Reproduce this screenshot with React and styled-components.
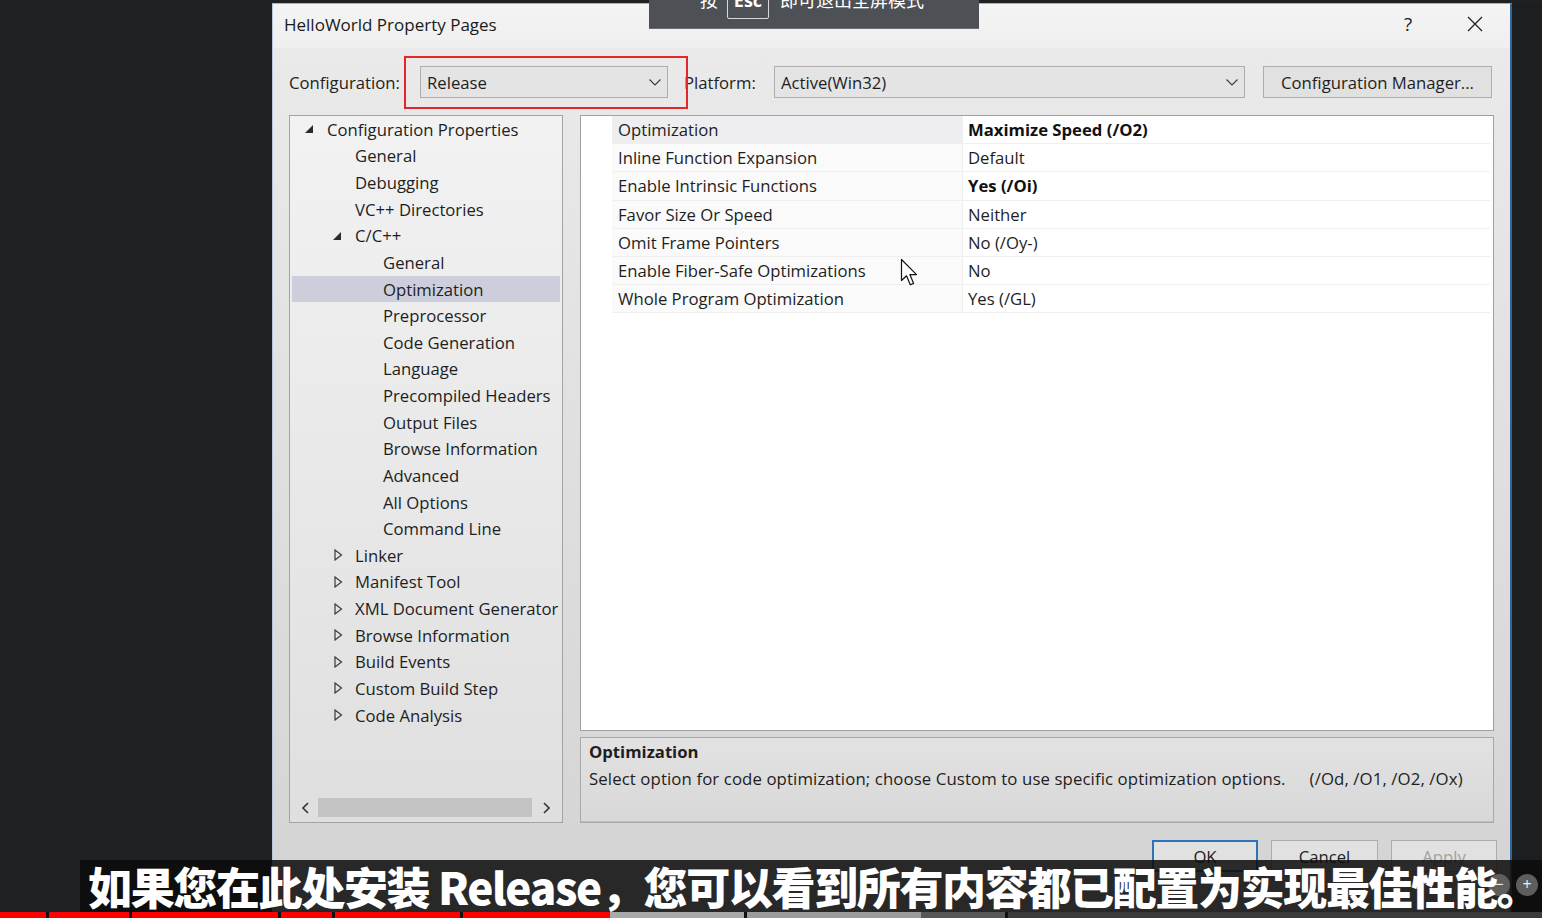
import React from "react";
import styled, { createGlobalStyle } from "styled-components";

const UI_FONT = `"Open Sans", "Noto Sans", sans-serif`;
const CJK_FONT = `"Noto Sans CJK SC", "Noto Sans", sans-serif`;

const treeItems = [
  { label: "Configuration Properties", level: 0, expander: "open" },
  { label: "General", level: 1 },
  { label: "Debugging", level: 1 },
  { label: "VC++ Directories", level: 1 },
  { label: "C/C++", level: 1, expander: "open" },
  { label: "General", level: 2 },
  { label: "Optimization", level: 2, selected: true },
  { label: "Preprocessor", level: 2 },
  { label: "Code Generation", level: 2 },
  { label: "Language", level: 2 },
  { label: "Precompiled Headers", level: 2 },
  { label: "Output Files", level: 2 },
  { label: "Browse Information", level: 2 },
  { label: "Advanced", level: 2 },
  { label: "All Options", level: 2 },
  { label: "Command Line", level: 2 },
  { label: "Linker", level: 1, expander: "closed" },
  { label: "Manifest Tool", level: 1, expander: "closed" },
  { label: "XML Document Generator", level: 1, expander: "closed" },
  { label: "Browse Information", level: 1, expander: "closed" },
  { label: "Build Events", level: 1, expander: "closed" },
  { label: "Custom Build Step", level: 1, expander: "closed" },
  { label: "Code Analysis", level: 1, expander: "closed" },
];

const properties = [
  { name: "Optimization", value: "Maximize Speed (/O2)", bold: true, selected: true },
  { name: "Inline Function Expansion", value: "Default" },
  { name: "Enable Intrinsic Functions", value: "Yes (/Oi)", bold: true },
  { name: "Favor Size Or Speed", value: "Neither" },
  { name: "Omit Frame Pointers", value: "No (/Oy-)" },
  { name: "Enable Fiber-Safe Optimizations", value: "No" },
  { name: "Whole Program Optimization", value: "Yes (/GL)" },
];

// video progress bar: [width, colour]
const progress = [
  [46, "#f00"], [3, "#111"], [80, "#f00"], [3, "#111"], [146, "#f00"], [3, "#111"],
  [51, "#f00"], [3, "#111"], [125, "#f00"], [3, "#111"], [147, "#f00"],
  [134, "#a9a9a9"], [3, "#111"], [174, "#9b9b9b"], [84, "#585858"], [3, "#111"],
  [534, "#3b3b3b"],
];

const Chevron = () => (
  <svg width="12" height="7" viewBox="0 0 12 7">
    <polyline points="0.5,0.5 6,6 11.5,0.5" fill="none" stroke="#3a3a3a" strokeWidth="1.1" />
  </svg>
);

const Expander = ({ kind }) =>
  kind === "open" ? (
    <svg width="8" height="8" viewBox="0 0 8 8">
      <polygon points="8,0 8,8 0,8" fill="#2b2b2b" />
    </svg>
  ) : (
    <svg width="9" height="12" viewBox="0 0 9 12" style={{ marginLeft: 1 }}>
      <polygon points="1,1 7.5,6 1,11" fill="none" stroke="#3a3a3a" strokeWidth="1.2" />
    </svg>
  );

const ScrollArrow = ({ dir }) => (
  <svg width="8" height="12" viewBox="0 0 8 12">
    <polyline
      points={dir === "left" ? "7,1 2,6 7,11" : "1,1 6,6 1,11"}
      fill="none"
      stroke="#333"
      strokeWidth="1.6"
    />
  </svg>
);

const App = () => {
  return (
    <Screen>
      <GlobalStyle />
      <Stage>
        <Backdrop $w={272} $bg="#1f2123" />
        <Dialog>
          <TitleBar>
            <Title>HelloWorld Property Pages</Title>
            <TitleButton>?</TitleButton>
            <TitleButton>
              <svg width="16" height="16" viewBox="0 0 16 16">
                <path d="M1 1 L15 15 M15 1 L1 15" stroke="#222" strokeWidth="1.3" />
              </svg>
            </TitleButton>
          </TitleBar>

          <Body>
            <ConfigRow>
              <FieldLabel $w={131}>Configuration:</FieldLabel>
              <Combo $w={248}>
                <span>Release</span>
                <Chevron />
              </Combo>
              <FieldLabel $w={90} $gap={16}>Platform:</FieldLabel>
              <Combo $w={471}>
                <span>Active(Win32)</span>
                <Chevron />
              </Combo>
              <Button $w={229} $gap={18}>Configuration Manager...</Button>
            </ConfigRow>

            <Main>
              <TreePanel>
                <TreeList>
                  {treeItems.map((item, i) => (
                    <TreeRow key={i} $level={item.level} $selected={item.selected}>
                      <ExpanderSlot>{item.expander && <Expander kind={item.expander} />}</ExpanderSlot>
                      <TreeLabel>{item.label}</TreeLabel>
                    </TreeRow>
                  ))}
                </TreeList>
                <HScroll>
                  <ScrollButton><ScrollArrow dir="left" /></ScrollButton>
                  <ScrollThumb />
                  <ScrollButton><ScrollArrow dir="right" /></ScrollButton>
                </HScroll>
              </TreePanel>

              <RightColumn>
                <GridPanel>
                  {properties.map((p) => (
                    <PropRow key={p.name}>
                      <PropName $selected={p.selected}>{p.name}</PropName>
                      <PropValue $bold={p.bold}>{p.value}</PropValue>
                    </PropRow>
                  ))}
                </GridPanel>
                <DescPanel>
                  <DescTitle>Optimization</DescTitle>
                  <DescText>
                    Select option for code optimization; choose Custom to use specific optimization options.
                    <Switches>(/Od, /O1, /O2, /Ox)</Switches>
                  </DescText>
                </DescPanel>
              </RightColumn>
            </Main>

            <ButtonRow>
              <Button $w={106} $primary>OK</Button>
              <Button $w={107}>Cancel</Button>
              <Button $w={106} $disabled>Apply</Button>
            </ButtonRow>
          </Body>
        </Dialog>
        <Backdrop $grow $bg="#1d1e20" />
      </Stage>

      <ProgressBar>
        {progress.map(([w, c], i) => (
          <ProgressSegment key={i} $w={w} $c={c} />
        ))}
      </ProgressBar>

      <Highlight />

      <Cursor>
        <svg width="19" height="29" viewBox="0 0 19 29">
          <path
            d="M1.5 1.5 L1.5 22.5 L6.5 17.8 L10.3 26.8 L13.6 25.4 L9.9 16.6 L16.5 16.6 Z"
            fill="#fff"
            stroke="#111"
            strokeWidth="1.2"
            strokeLinejoin="round"
          />
        </svg>
      </Cursor>

      <FullscreenHint>
        <HintRow>
          <HintText>按</HintText>
          <KeyCap>Esc</KeyCap>
          <HintText>即可退出全屏模式</HintText>
        </HintRow>
      </FullscreenHint>

      <Subtitle>
        <ZoomDot $x={1488}>−</ZoomDot>
        <ZoomDot $x={1516}>+</ZoomDot>
        <SubtitleText>如果您在此处安装 Release，您可以看到所有内容都已配置为实现最佳性能。</SubtitleText>
      </Subtitle>
    </Screen>
  );
};

export default App;

const GlobalStyle = createGlobalStyle`
  html, body {
    margin: 0;
    padding: 0;
    background: #1f2123;
    overflow: hidden;
  }
  * {
    box-sizing: border-box;
  }
`;

const Screen = styled.div`
  position: relative;
  width: 1542px;
  height: 918px;
  display: flex;
  flex-direction: column;
  overflow: hidden;
  background: #1f2123;
  font-family: ${UI_FONT};
`;

const Stage = styled.div`
  height: 912px;
  display: flex;
  padding-top: 3px;
  overflow: hidden;
`;

const Backdrop = styled.div`
  width: ${(p) => (p.$w ? `${p.$w}px` : "auto")};
  flex: ${(p) => (p.$grow ? 1 : "none")};
  background: ${(p) => p.$bg};
`;

const Dialog = styled.div`
  width: 1240px;
  flex: none;
  height: 960px;
  display: flex;
  flex-direction: column;
  border-left: 1px solid #b4c8dc;
  border-top: 1px solid #9db3c9;
  border-right: 2px solid #2d679c;
  background: linear-gradient(#ebebeb, #d2d2d2);
  color: #1e1e1e;
  font-size: 16.7px;
`;

const TitleBar = styled.div`
  height: 44px;
  display: flex;
  align-items: center;
  padding: 0 12px 4px 11px;
  background: linear-gradient(#f4f4f4, #efefef);
`;

const Title = styled.div`
  flex: 1;
  font-size: 17px;
  color: #1a1a1a;
`;

const TitleButton = styled.div`
  width: 46px;
  height: 30px;
  display: flex;
  align-items: center;
  justify-content: center;
  font-size: 19px;
  color: #222;
  & + & {
    margin-left: 21px;
  }
`;

const Body = styled.div`
  flex: 1;
  display: flex;
  flex-direction: column;
  padding: 18px 16px 0 16px;
`;

const ConfigRow = styled.div`
  height: 32px;
  display: flex;
  align-items: center;
`;

const FieldLabel = styled.div`
  width: ${(p) => p.$w}px;
  margin-left: ${(p) => p.$gap || 0}px;
  white-space: nowrap;
`;

const Combo = styled.div`
  width: ${(p) => p.$w}px;
  height: 32px;
  display: flex;
  align-items: center;
  justify-content: space-between;
  padding: 0 6px 0 6px;
  background: #e4e4e4;
  border: 1px solid #adadad;
`;

const Button = styled.div`
  width: ${(p) => p.$w}px;
  height: 32px;
  margin-left: ${(p) => p.$gap || 0}px;
  display: flex;
  align-items: center;
  justify-content: center;
  background: #e1e1e1;
  border: ${(p) => (p.$primary ? "2px solid #2f72b8" : "1px solid #adadad")};
  color: ${(p) => (p.$disabled ? "#a0a0a0" : "#1e1e1e")};
  white-space: nowrap;
`;

const Main = styled.div`
  margin-top: 17px;
  height: 708px;
  display: flex;
  gap: 17px;
`;

const TreePanel = styled.div`
  width: 274px;
  display: flex;
  flex-direction: column;
  border: 1px solid #a3a3a3;
  background: linear-gradient(#f2f2f2, #dfdfdf);
  padding: 0 1px 4px 1px;
`;

const TreeList = styled.div`
  flex: 1;
  overflow: hidden;
`;

const TreeRow = styled.div`
  height: 26.64px;
  display: flex;
  align-items: center;
  padding-left: ${(p) => 13 + p.$level * 28}px;
  margin: 0 1px;
  background: ${(p) => (p.$selected ? "#cccfdb" : "transparent")};
  white-space: nowrap;
`;

const ExpanderSlot = styled.div`
  width: 22px;
  flex: none;
  display: flex;
  align-items: center;
`;

const TreeLabel = styled.span`
  color: #1e1e1e;
`;

const HScroll = styled.div`
  height: 21px;
  display: flex;
  align-items: stretch;
`;

const ScrollButton = styled.div`
  width: 27px;
  display: flex;
  align-items: center;
  justify-content: center;
  &:last-child {
    width: 29px;
  }
`;

const ScrollThumb = styled.div`
  flex: 1;
  background: #c3c3c3;
  margin: 1px 0;
`;

const RightColumn = styled.div`
  flex: 1;
  display: flex;
  flex-direction: column;
  gap: 6px;
`;

const GridPanel = styled.div`
  flex: 1;
  background: #fff;
  border: 1px solid #a0a0a0;
  padding: 0 3px 0 31px;
`;

const PropRow = styled.div`
  height: 28.2px;
  display: grid;
  grid-template-columns: 350px 1fr;
  border-bottom: 1px solid #efefef;
`;

const PropName = styled.div`
  display: flex;
  align-items: center;
  padding-left: 6px;
  background: ${(p) => (p.$selected ? "#eeeef1" : "#fafafa")};
  white-space: nowrap;
`;

const PropValue = styled.div`
  display: flex;
  align-items: center;
  padding-left: 5px;
  border-left: 1px solid #efefef;
  font-weight: ${(p) => (p.$bold ? 700 : 400)};
  color: ${(p) => (p.$bold ? "#111" : "#1e1e1e")};
`;

const DescPanel = styled.div`
  height: 86px;
  padding: 2px 8px 0 8px;
  border: 1px solid #a8a8a8;
  box-shadow: inset 0 -1px 0 #bdbdbd;
  background: linear-gradient(#e2e2e2, #d8d8d8);
`;

const DescTitle = styled.div`
  line-height: 24px;
  font-weight: 700;
`;

const DescText = styled.div`
  margin-top: 3px;
  line-height: 24px;
  font-size: 16.8px;
  letter-spacing: 0.1px;
  white-space: nowrap;
`;

const Switches = styled.span`
  margin-left: 24px;
`;

const ButtonRow = styled.div`
  margin-top: 17px;
  margin-right: -3px;
  display: flex;
  justify-content: flex-end;
  gap: 13px;
`;

const ProgressBar = styled.div`
  height: 6px;
  display: flex;
  background: #111;
`;

const ProgressSegment = styled.div`
  width: ${(p) => p.$w}px;
  flex: none;
  background: ${(p) => p.$c};
`;

const Highlight = styled.div`
  position: absolute;
  left: 404px;
  top: 56px;
  width: 284px;
  height: 53px;
  border: 2px solid #e3252c;
`;

const Cursor = styled.div`
  position: absolute;
  left: 900px;
  top: 258px;
  line-height: 0;
`;

const FullscreenHint = styled.div`
  position: absolute;
  left: 649px;
  top: 0;
  width: 330px;
  height: 29px;
  overflow: hidden;
  background: #4d5054;
  border-bottom: 1px solid #6a6d70;
  padding-left: 51px;
`;

const HintRow = styled.div`
  display: flex;
  align-items: flex-start;
  margin-top: -14px;
  color: #fff;
  font-family: ${CJK_FONT};
  font-size: 18px;
`;

const HintText = styled.span`
  line-height: 26px;
`;

const KeyCap = styled.span`
  height: 33px;
  width: 42px;
  margin: 0 11px 0 9px;
  border: 1px solid #d8d8d8;
  border-radius: 0 0 2px 2px;
  display: flex;
  align-items: flex-start;
  justify-content: center;
  line-height: 26px;
  font-family: ${UI_FONT};
  font-weight: 700;
`;

const Subtitle = styled.div`
  position: absolute;
  left: 80px;
  top: 860px;
  width: 1462px;
  height: 52px;
  background: rgba(12, 12, 12, 0.86);
`;

const SubtitleText = styled.div`
  position: relative;
  padding-left: 8px;
  line-height: 52px;
  color: #fff;
  font-family: ${CJK_FONT};
  font-size: 44px;
  font-weight: 900;
  letter-spacing: -1.35px;
  white-space: nowrap;
`;

const ZoomDot = styled.div`
  position: absolute;
  left: ${(p) => p.$x - 80}px;
  top: 14px;
  width: 22px;
  height: 22px;
  border-radius: 50%;
  background: #5e5e5e;
  color: #eee;
  font-family: ${UI_FONT};
  font-size: 16px;
  line-height: 21px;
  text-align: center;
`;
